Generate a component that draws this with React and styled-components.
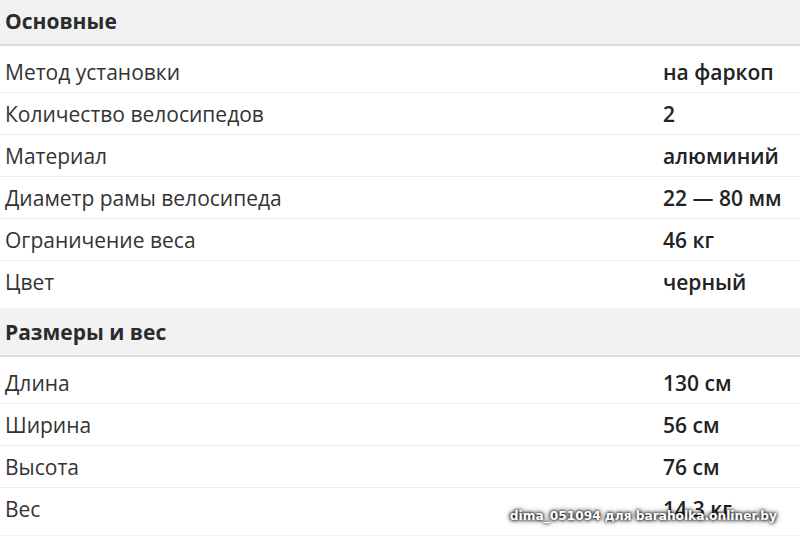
import React from "react";
import styled, { createGlobalStyle } from "styled-components";

const Global = createGlobalStyle`
  html, body { margin: 0; padding: 0; background: #fff; }
  body { font-family: "Open Sans", "Noto Sans", sans-serif; color: #333; overflow: hidden; }
`;

const Page = styled.div`
  position: relative;
  width: 800px;
  height: 538px;
  overflow: hidden;
`;

const Sheet = styled.div`
  margin-top: -2px;
`;

const Section = styled.section`
  border-bottom: 1px solid #f0f0f0;
`;

const Header = styled.div`
  height: 46px;
  display: flex;
  align-items: center;
  padding: 0 5px;
  background: #f2f2f2;
  border-bottom: 2px solid #dcdcdc;
  font-weight: 700;
  font-size: 21px;
  color: #2b2b2b;
`;

const Body = styled.div`
  padding: 5px 0 6px;
`;

const Row = styled.div`
  display: grid;
  grid-template-columns: 1fr 142px;
  height: 42px;
  box-sizing: border-box;
  align-items: center;
  border-bottom: 1px solid #ececec;
  &:last-child { border-bottom: none; height: 41px; }
`;

const Cell = styled.div`
  padding: 0 5px;
  font-size: 21px;
  font-weight: ${(p) => (p.$value ? 600 : 400)};
  color: ${(p) => (p.$value ? "#222" : "#333")};
  white-space: nowrap;
`;

const Watermark = styled.div`
  position: absolute;
  right: 23px;
  bottom: 15px;
  font-family: "DejaVu Sans", Verdana, sans-serif;
  font-weight: 700;
  font-size: 12.2px;
  color: #fff;
  text-shadow: 0 0 3px #000, 0 0 4px rgba(0,0,0,0.8), 0 0 6px rgba(0,0,0,0.5);
  white-space: nowrap;
`;

const data = [
  {
    title: "Основные",
    rows: [
      ["Метод установки", "на фаркоп"],
      ["Количество велосипедов", "2"],
      ["Материал", "алюминий"],
      ["Диаметр рамы велосипеда", "22 — 80 мм"],
      ["Ограничение веса", "46 кг"],
      ["Цвет", "черный"],
    ],
  },
  {
    title: "Размеры и вес",
    rows: [
      ["Длина", "130 см"],
      ["Ширина", "56 см"],
      ["Высота", "76 см"],
      ["Вес", "14.3 кг"],
    ],
  },
];

export default function App() {
  return (
    <Page>
      <Global />
      <Sheet>
        {data.map((s) => (
          <Section key={s.title}>
            <Header>{s.title}</Header>
            <Body>
              {s.rows.map(([k, v]) => (
                <Row key={k}>
                  <Cell>{k}</Cell>
                  <Cell $value>{v}</Cell>
                </Row>
              ))}
            </Body>
          </Section>
        ))}
      </Sheet>
      <Watermark>dima_051094 для baraholka.onliner.by</Watermark>
    </Page>
  );
}
